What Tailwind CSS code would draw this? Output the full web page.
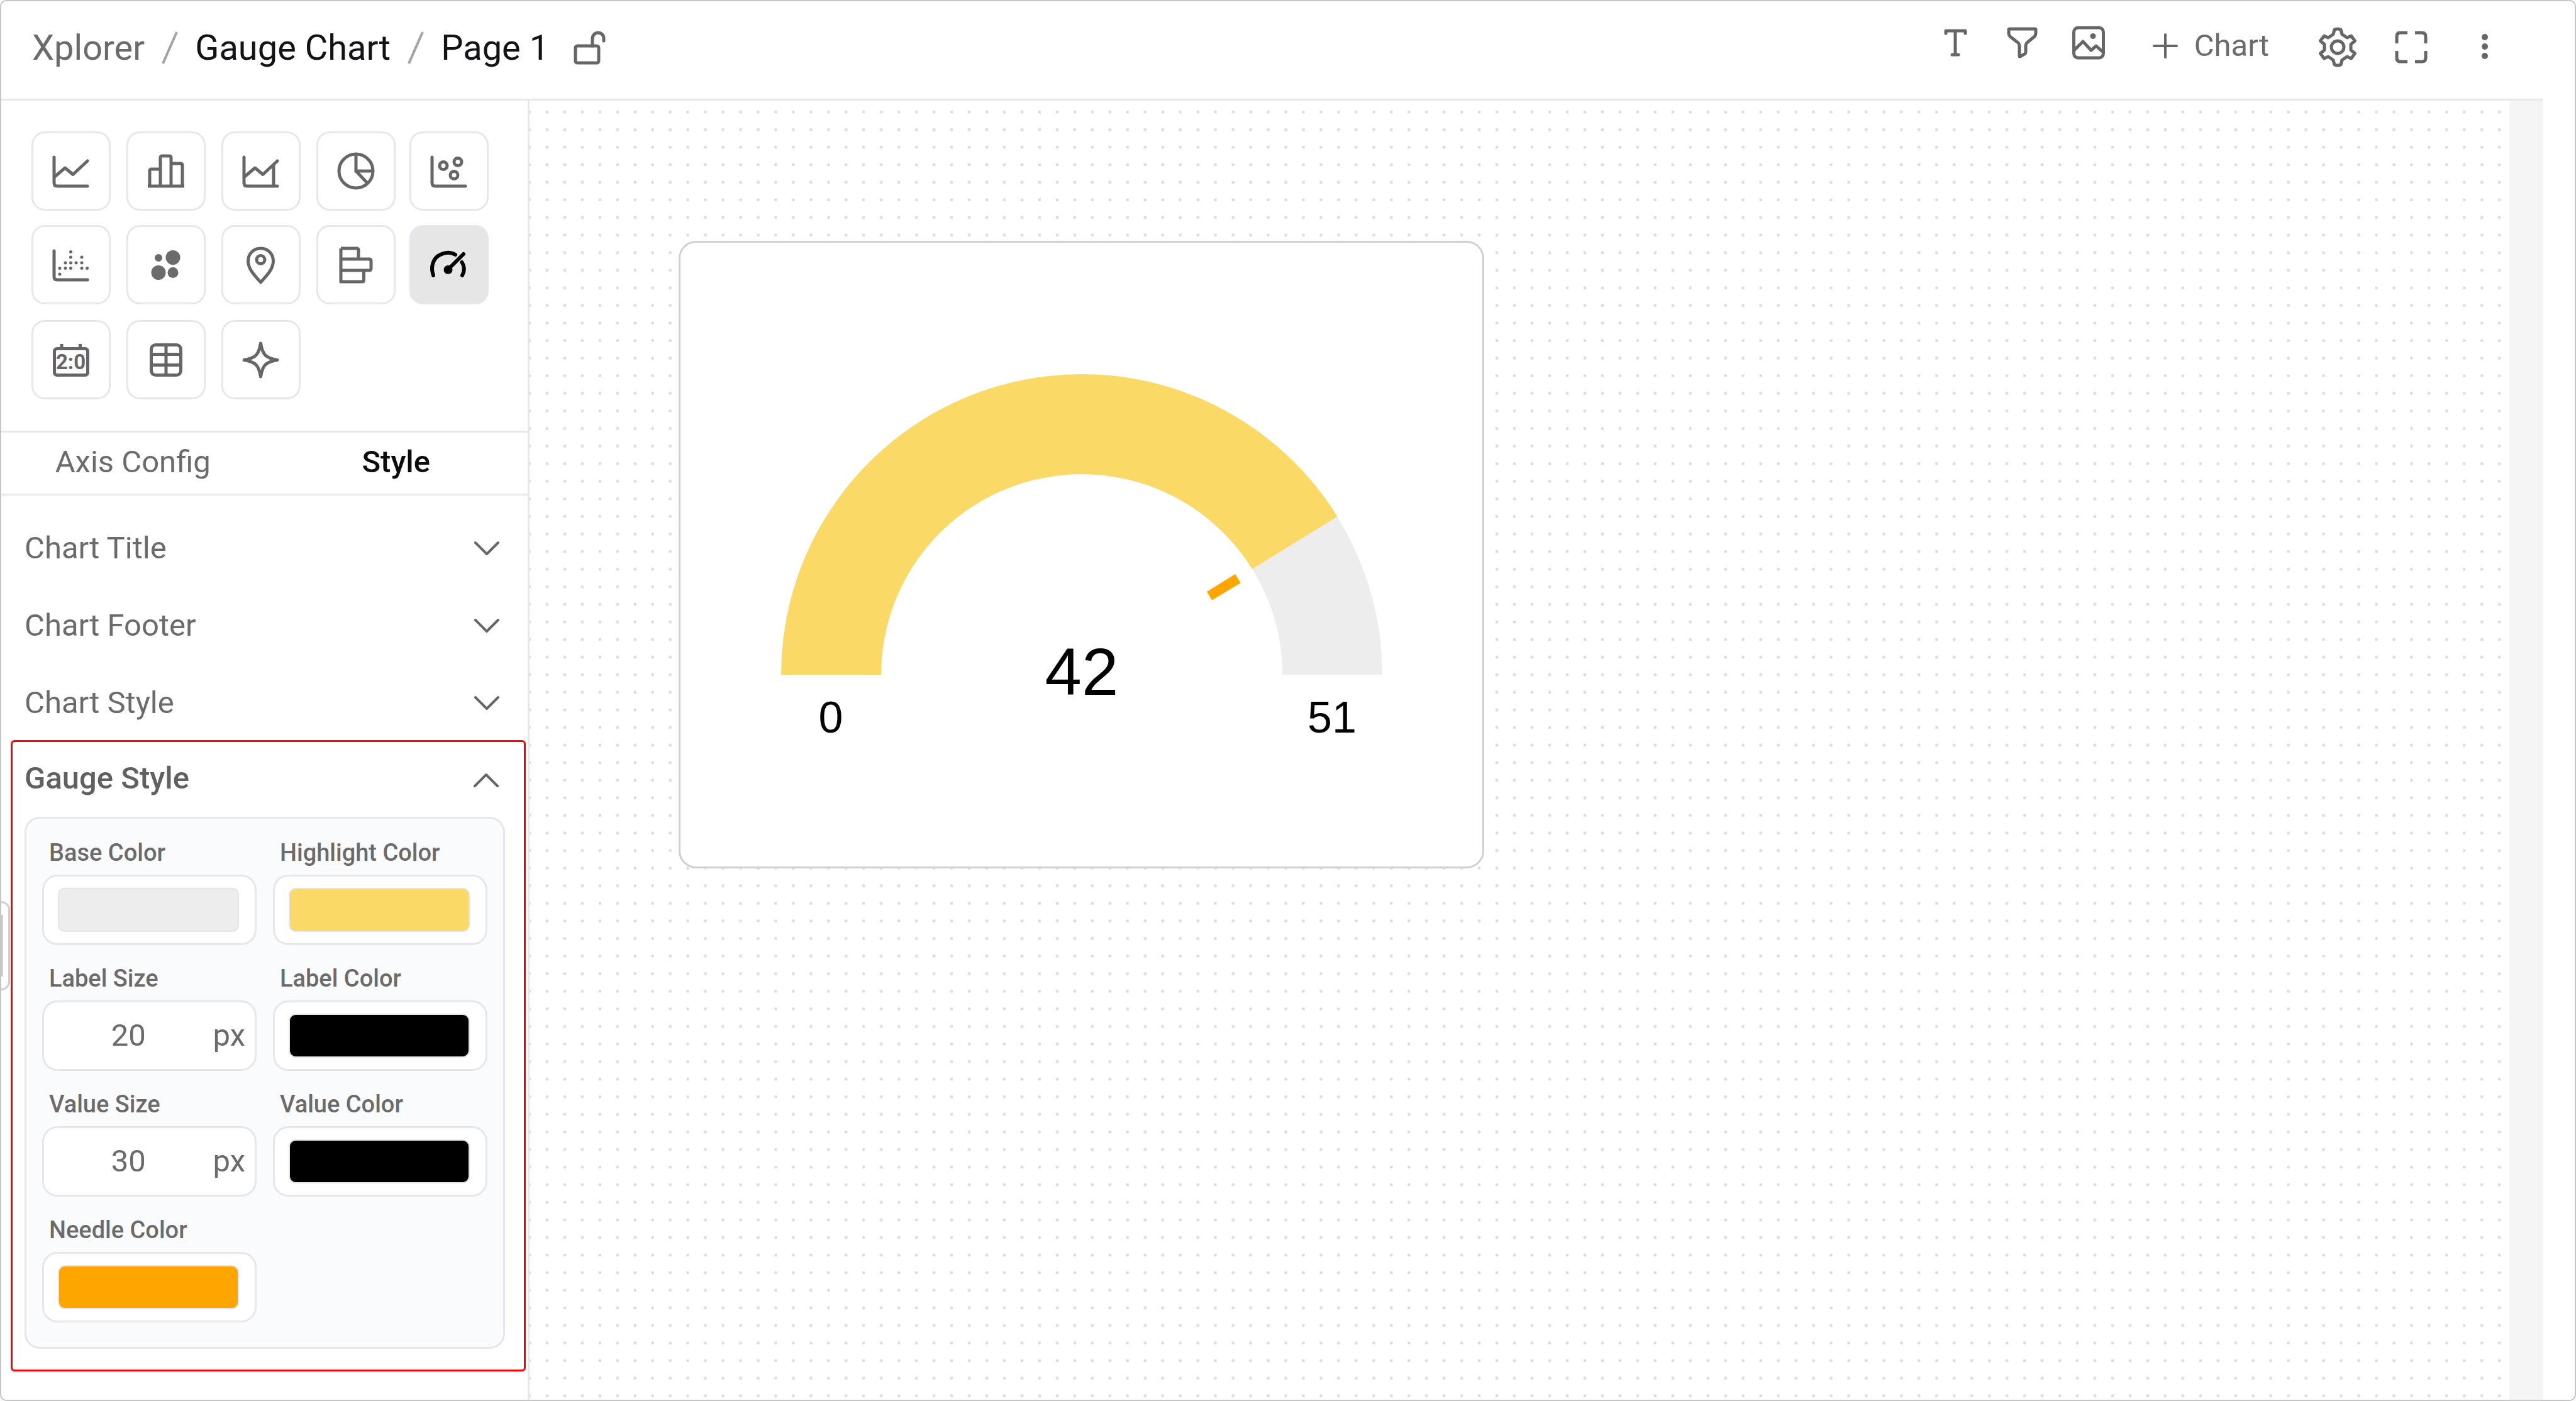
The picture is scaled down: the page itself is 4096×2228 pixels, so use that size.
<!DOCTYPE html>
<html lang="en">
<head>
<meta charset="utf-8">
<title>Gauge Chart - Xplorer</title>
<script src="https://cdn.jsdelivr.net/npm/@tailwindcss/browser@4"></script>
</head>
<body class="bg-white font-[Roboto,sans-serif] text-[#666666]">
<div class="relative flex h-screen flex-col overflow-hidden rounded-[10px] border-2 border-[#c6c6c6] bg-white pr-[51px]">

  <header class="flex h-[158px] shrink-0 items-center justify-between border-b-3 border-[#e6e7ec] pr-[50px] pb-[8px] pl-[49px]">
    <nav aria-label="Breadcrumb" class="flex items-center text-[56px] leading-[66px]">
      <a href="#" class="text-[#6b6b6b]">Xplorer</a>
      <svg class="mx-[27px] h-[54px] w-[26px]" viewBox="0 0 26 54" fill="none" stroke="#a3a3a3" stroke-width="4"><path d="M24 2L2 52"/></svg>
      <a href="#" class="text-[#111317]">Gauge Chart</a>
      <svg class="mx-[27px] h-[54px] w-[26px]" viewBox="0 0 26 54" fill="none" stroke="#a3a3a3" stroke-width="4"><path d="M24 2L2 52"/></svg>
      <span class="text-[#111317]" aria-current="page">Page 1</span>
      <button type="button" aria-label="Unlock page" class="ml-[39px]">
        <svg class="h-[56px] w-[52px]" viewBox="911 46 52 56" fill="none" stroke="#666" stroke-width="5" stroke-linecap="round"><rect x="914" y="71" width="37" height="27" rx="3"/><path d="M941 71V60C941 54 945 50 950 50C955 50 959 54 959 59V63"/></svg>
      </button>
    </nav>

    <div class="flex items-center">
      <div class="flex gap-[36px] pb-[16px]">
        <button type="button" aria-label="Add text" class="flex w-[70px] justify-center">
          <svg class="h-[60px] w-[60px]" viewBox="3080 38 60 60" fill="none" stroke="#666" stroke-width="5" stroke-linecap="round" stroke-linejoin="round"><path d="M3095 53V49H3126V53M3110 49V87M3105 87H3115"/></svg>
        </button>
        <button type="button" aria-label="Add filter" class="flex w-[70px] justify-center">
          <svg class="h-[60px] w-[60px]" viewBox="3186 38 60 60" fill="none" stroke="#666" stroke-width="5" stroke-linejoin="round"><path d="M3196 46H3237Q3238 46 3238 47V53Q3238 56 3236 58L3224 68Q3222 70 3222 73V83Q3222 85 3220 86L3213 90Q3212 90 3212 89V73Q3212 70 3210 68L3197 58Q3195 56 3195 53V47Q3195 46 3196 46Z"/></svg>
        </button>
        <button type="button" aria-label="Add image" class="flex w-[70px] justify-center">
          <svg class="h-[60px] w-[60px]" viewBox="3293 38 60 60" fill="none" stroke="#666" stroke-width="5" stroke-linejoin="round"><rect x="3299.500" y="44" width="47" height="48" rx="7"/><path d="M3300 80L3314 66L3327 80L3335 73L3346 83"/><circle cx="3330" cy="57.500" r="4.500" fill="#666" stroke="none"/></svg>
        </button>
      </div>
      <button type="button" class="ml-[67px] flex items-center gap-[26px] pb-[5px] text-[49px] leading-[56px] text-[#6b6b6b]">
        <svg class="h-[40px] w-[40px]" viewBox="0 0 40 40" fill="none" stroke="#666" stroke-width="4" stroke-linecap="round"><path d="M20 2V38M2 20H38"/></svg>
        Chart
      </button>
      <div class="ml-[67px] flex gap-[33px] pb-[2px]">
        <button type="button" aria-label="Settings" class="flex w-[84px] justify-center">
          <svg class="h-[68px] w-[68px]" viewBox="-34 -34 68 68" fill="none" stroke="#666" stroke-width="5" stroke-linejoin="round"><path d="M-5 -28Q0 -30 5 -28L7 -20.500L15 -15L21.500 -18L27.500 -10L21 -4.500V4.500L27.500 10L21.500 18L15 15L7 20.500L5 28Q0 30 -5 28L-7 20.500L-15 15L-21.500 18L-27.500 10L-21 4.500V-4.500L-27.500 -10L-21.500 -18L-15 -15L-7 -20.500Z"/><circle r="10"/></svg>
        </button>
        <button type="button" aria-label="Full screen" class="flex w-[84px] justify-center">
          <svg class="h-[68px] w-[68px]" viewBox="-34 -34 68 68" fill="none" stroke="#666" stroke-width="5"><path d="M-6 -23H-17Q-23 -23 -23 -17V-6M6 -23H17Q23 -23 23 -17V-6M-6 23H-17Q-23 23 -23 17V6M6 23H17Q23 23 23 17V6"/></svg>
        </button>
        <button type="button" aria-label="More" class="flex w-[84px] justify-center">
          <svg class="h-[68px] w-[68px]" viewBox="-34 -34 68 68" fill="#666"><circle cy="-16" r="5"/><circle cy="-1" r="5"/><circle cy="14" r="5"/></svg>
        </button>
      </div>
    </div>
  </header>

  <div class="flex min-h-0 flex-1">
    <aside class="w-[840px] shrink-0 border-r-3 border-[#e6e7ec]">
      <div class="grid grid-cols-[151px_151px_151px_148px_126px] grid-rows-[149px_151px_126px] pt-[49px] pb-[50px] pl-[48px] [&>button]:size-[126px] [&>button]:rounded-[21px] [&>button]:border-3 [&>button]:border-[#e6e7ec] [&_svg]:-m-[3px] [&_svg]:size-[126px] [&_svg]:fill-none [&_svg]:stroke-[#666] [&_svg]:stroke-5">
        <button type="button" aria-label="Line chart"><svg viewBox="0 0 126 126" stroke-linecap="round" stroke-linejoin="round"><path d="M36 41V82Q36 87 41 87H89M37 72L53.500 58L66 68.500L89 47"/></svg></button>
        <button type="button" aria-label="Bar chart"><svg viewBox="0 0 126 126" stroke-linejoin="round"><path d="M37 87V63Q37 60 40 60H54M71 51H86Q89 51 89 54V87M54 87V42Q54 39 57 39H68Q71 39 71 42V87M34 87H92"/></svg></button>
        <button type="button" aria-label="Area chart"><svg viewBox="0 0 126 126" stroke-linecap="round" stroke-linejoin="round"><path d="M36 41V82Q36 87 41 87H89M37 72L53.500 58L66 68.500L89 47M83 54V86"/></svg></button>
        <button type="button" aria-label="Pie chart"><svg viewBox="0 0 126 126"><circle cx="63" cy="63" r="27"/><path d="M63 36V63H90M63 63L81 82"/></svg></button>
        <button type="button" aria-label="Scatter chart"><svg viewBox="0 0 126 126" stroke-linecap="round"><path d="M36 41V82Q36 87 41 87H89"/><circle cx="54" cy="54.500" r="6"/><circle cx="77" cy="48.500" r="6"/><circle cx="71" cy="69.500" r="6"/></svg></button>

        <button type="button" aria-label="Histogram"><svg viewBox="0 0 126 126" stroke-linecap="round"><path d="M36 41V82Q36 87 41 87H89"/><path d="M45 68.500h.01M45 78h.01M54 60h.01M54 68.500h.01M62.500 42.500h.01M62.500 51h.01M62.500 60h.01M62.500 68.500h.01M71 60h.01M80 51h.01M80 60h.01M80 68.500h.01M88.500 68.500h.01"/></svg></button>
        <button type="button" aria-label="Bubble chart"><svg viewBox="0 0 126 126"><g fill="#6b6b6b" stroke="none"><circle cx="51" cy="52" r="6"/><circle cx="74" cy="51.500" r="11.500"/><circle cx="51" cy="75.500" r="11.500"/><circle cx="74" cy="75.500" r="8.500"/></g></svg></button>
        <button type="button" aria-label="Map chart"><svg viewBox="0 0 126 126" stroke-linejoin="round"><path d="M62.500 37C51 37 42.500 45.500 42.500 57C42.500 71 55 82 62.500 91C70 82 82.500 71 82.500 57C82.500 45.500 74 37 62.500 37Z"/><circle cx="62.500" cy="55" r="6.500"/></svg></button>
        <button type="button" aria-label="Horizontal bar chart"><svg viewBox="0 0 126 126" stroke-linejoin="round"><path d="M39 37H64Q67 37 67 40V54M39 54H84Q87 54 87 57V69Q87 72 84 72H39M75.500 72V87Q75.500 90 72.500 90H39V37"/></svg></button>
        <button type="button" aria-label="Gauge chart" aria-pressed="true" class="bg-[#e6e6e6]"><svg viewBox="0 0 126 126" stroke-linecap="round"><g class="stroke-black stroke-6"><path d="M38 80C33 66 38 52 49 47C57 43 66 43 73 47M83.500 59C88 66 88 73 84 80M86 46L62 70"/><circle cx="61.500" cy="71" r="4" fill="#000"/></g></svg></button>

        <button type="button" aria-label="Scorecard"><svg viewBox="0 0 126 126" stroke-linejoin="round"><rect x="36.500" y="45.500" width="53" height="42" rx="4"/><path d="M48 38V45M77.500 38V45"/><text x="62.500" y="78" text-anchor="middle" fill="#666" stroke="none" font-size="33" font-weight="700">2:0</text></svg></button>
        <button type="button" aria-label="Table"><svg viewBox="0 0 126 126"><rect x="39.500" y="39.500" width="47" height="48" rx="7"/><path d="M63 39V88M39 54.500H87M39 71.500H87"/></svg></button>
        <button type="button" aria-label="Insights"><svg viewBox="0 0 126 126" stroke-linejoin="round"><path d="M62.500 37C64 46 66 52 70 56C74 60 80 62 89 63.500C80 65 74 67 70 71C66 75 64 81 62.500 90C61 81 59 75 55 71C51 67 45 65 36 63.500C45 62 51 60 55 56C59 52 61 46 62.500 37Z"/></svg></button>
      </div>

      <div role="tablist" class="grid h-[103px] grid-cols-2 border-y-3 border-[#e6e7ec] pb-[3px] text-[49px] leading-[56px]">
        <button type="button" role="tab" aria-selected="false" class="text-[#6b6b6b]">Axis Config</button>
        <button type="button" role="tab" aria-selected="true" class="font-medium text-[#0c0c0e]">Style</button>
      </div>

      <div class="pt-[22px] text-[49px] leading-[56px] text-[#6b6b6b]">
        <button type="button" aria-expanded="false" class="flex h-[123px] w-full items-center justify-between pr-[45px] pl-[37px]">Chart Title
          <svg class="h-[24px] w-[40px]" viewBox="0 0 40 24" fill="none" stroke="#666" stroke-width="4" stroke-linecap="round" stroke-linejoin="round"><path d="M2 3L20 21L38 3"/></svg></button>
        <button type="button" aria-expanded="false" class="flex h-[123px] w-full items-center justify-between pr-[45px] pl-[37px]">Chart Footer
          <svg class="h-[24px] w-[40px]" viewBox="0 0 40 24" fill="none" stroke="#666" stroke-width="4" stroke-linecap="round" stroke-linejoin="round"><path d="M2 3L20 21L38 3"/></svg></button>
        <button type="button" aria-expanded="false" class="flex h-[123px] w-full items-center justify-between pr-[45px] pl-[37px]">Chart Style
          <svg class="h-[24px] w-[40px]" viewBox="0 0 40 24" fill="none" stroke="#666" stroke-width="4" stroke-linecap="round" stroke-linejoin="round"><path d="M2 3L20 21L38 3"/></svg></button>

        <section class="-mt-[2px] mr-[3px] ml-[15px] rounded-[6px] border-3 border-[#ff0000] pb-[33px]">
          <button type="button" aria-expanded="true" class="mb-[4px] flex h-[115px] w-full items-center justify-between pr-[40px] pl-[19px] font-medium text-[#606060]">Gauge Style
            <svg class="h-[30px] w-[40px]" viewBox="0 0 40 30" fill="none" stroke="#666" stroke-width="4" stroke-linecap="round" stroke-linejoin="round"><path d="M2 27L20 9L38 27"/></svg></button>

          <div class="mr-[30px] ml-[19px] grid grid-cols-2 gap-x-[26px] gap-y-[18px] rounded-[24px] border-3 border-[#e6e7ec] bg-[#fafbfd] px-[25px] pt-[19px] pb-[39px]">
            <div>
              <label for="base-color" class="block h-[70px] pl-[11px] text-[38px] leading-[70px] font-medium">Base Color</label>
              <div class="flex h-[112px] items-center justify-center rounded-[24px] border-3 border-[#e6e7ec] bg-white pr-[3px]">
                <input id="base-color" type="color" value="#ededed" class="h-[70px] w-[288px] appearance-none border-0 bg-transparent p-0 [&::-webkit-color-swatch]:rounded-[11px] [&::-webkit-color-swatch]:border-2 [&::-webkit-color-swatch]:border-[#e2e4ea] [&::-webkit-color-swatch-wrapper]:p-0">
              </div>
            </div>
            <div>
              <label for="highlight-color" class="block h-[70px] pl-[11px] text-[38px] leading-[70px] font-medium">Highlight Color</label>
              <div class="flex h-[112px] items-center justify-center rounded-[24px] border-3 border-[#e6e7ec] bg-white pr-[3px]">
                <input id="highlight-color" type="color" value="#fad967" class="h-[70px] w-[288px] appearance-none border-0 bg-transparent p-0 [&::-webkit-color-swatch]:rounded-[11px] [&::-webkit-color-swatch]:border-2 [&::-webkit-color-swatch]:border-[#e2e4ea] [&::-webkit-color-swatch-wrapper]:p-0">
              </div>
            </div>
            <div>
              <label for="label-size" class="block h-[70px] pl-[11px] text-[38px] leading-[70px] font-medium">Label Size</label>
              <div class="flex h-[112px] items-center rounded-[24px] border-3 border-[#e6e7ec] bg-white pr-[15px]">
                <input id="label-size" type="text" inputmode="numeric" value="20" class="min-w-0 flex-1 bg-transparent text-center">
                <span>px</span>
              </div>
            </div>
            <div>
              <label for="label-color" class="block h-[70px] pl-[11px] text-[38px] leading-[70px] font-medium">Label Color</label>
              <div class="flex h-[112px] items-center justify-center rounded-[24px] border-3 border-[#e6e7ec] bg-white pr-[3px]">
                <input id="label-color" type="color" value="#000000" class="h-[70px] w-[288px] appearance-none border-0 bg-transparent p-0 [&::-webkit-color-swatch]:rounded-[11px] [&::-webkit-color-swatch]:border-2 [&::-webkit-color-swatch]:border-[#e2e4ea] [&::-webkit-color-swatch-wrapper]:p-0">
              </div>
            </div>
            <div>
              <label for="value-size" class="block h-[70px] pl-[11px] text-[38px] leading-[70px] font-medium">Value Size</label>
              <div class="flex h-[112px] items-center rounded-[24px] border-3 border-[#e6e7ec] bg-white pr-[15px]">
                <input id="value-size" type="text" inputmode="numeric" value="30" class="min-w-0 flex-1 bg-transparent text-center">
                <span>px</span>
              </div>
            </div>
            <div>
              <label for="value-color" class="block h-[70px] pl-[11px] text-[38px] leading-[70px] font-medium">Value Color</label>
              <div class="flex h-[112px] items-center justify-center rounded-[24px] border-3 border-[#e6e7ec] bg-white pr-[3px]">
                <input id="value-color" type="color" value="#000000" class="h-[70px] w-[288px] appearance-none border-0 bg-transparent p-0 [&::-webkit-color-swatch]:rounded-[11px] [&::-webkit-color-swatch]:border-2 [&::-webkit-color-swatch]:border-[#e2e4ea] [&::-webkit-color-swatch-wrapper]:p-0">
              </div>
            </div>
            <div>
              <label for="needle-color" class="block h-[70px] pl-[11px] text-[38px] leading-[70px] font-medium">Needle Color</label>
              <div class="flex h-[112px] items-center justify-center rounded-[24px] border-3 border-[#e6e7ec] bg-white pr-[3px]">
                <input id="needle-color" type="color" value="#ffa500" class="h-[70px] w-[288px] appearance-none border-0 bg-transparent p-0 [&::-webkit-color-swatch]:rounded-[11px] [&::-webkit-color-swatch]:border-2 [&::-webkit-color-swatch]:border-[#e2e4ea] [&::-webkit-color-swatch-wrapper]:p-0">
              </div>
            </div>
          </div>
        </section>
      </div>
    </aside>

    <main class="relative min-w-0 flex-1 overflow-hidden">
      <!-- canvas snap grid -->
      <svg class="absolute inset-0 h-full w-full" viewBox="0 0 4504 2955" preserveAspectRatio="xMinYMin slice" aria-hidden="true">
        <defs><pattern id="dots" width="40" height="40" patternUnits="userSpaceOnUse" x="-20" y="6"><circle cx="20" cy="20" r="3.500" fill="#dcdcdc"/></pattern></defs>
        <rect width="4504" height="2990" fill="url(#dots)"/>
      </svg>
      <article class="absolute top-[223px] left-[237px] h-[998px] w-[1281px] rounded-[28px] border-3 border-[#d0d0d0] bg-white">
        <svg class="h-full w-full font-['Liberation_Sans',Arial,sans-serif]" viewBox="1082 386 1275 992" role="img" aria-label="Gauge showing 42 on a scale of 0 to 51">
          <path fill="#ededed" d="M2126 821.500A478 478 0 0 1 2198 1073H2039A319 319 0 0 0 1991 905Z"/>
          <path fill="#fad967" d="M1242 1073A478 478 0 0 1 2126.400 821.400L1991.200 905.100A319 319 0 0 0 1401 1073Z"/>
          <path fill="#ffa500" d="M1964 913L1972.500 927L1927 954.500L1919 941Z"/>
          <text x="1720" y="1105" text-anchor="middle" font-size="105">42</text>
          <text x="1321" y="1165" text-anchor="middle" font-size="70">0</text>
          <text x="2118" y="1165" text-anchor="middle" font-size="70">51</text>
        </svg>
      </article>
    </main>
    <div class="w-[53px] shrink-0 bg-[#f5f5f5]"></div>
  </div>

  <!-- panel drag handle on the window edge -->
  <div class="absolute top-[1431px] -left-[2px] flex h-[142px] w-[16px] items-center rounded-r-[14px] border-3 border-l-0 border-[#cfcfcf] bg-white">
    <div class="h-[98px] w-[5px] bg-[#cccccc]"></div>
  </div>
</div>
</body>
</html>
